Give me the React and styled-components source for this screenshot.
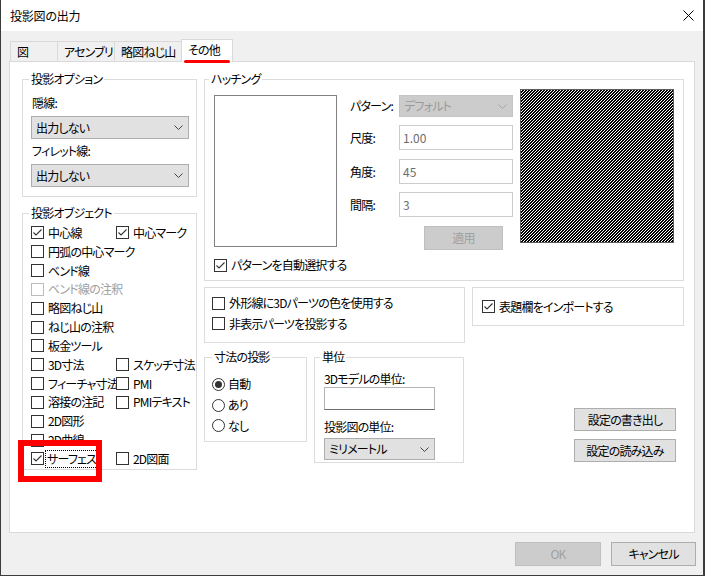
import React from 'react';
import styled, { createGlobalStyle } from 'styled-components';

const Global = createGlobalStyle`
  html, body { margin: 0; padding: 0; background: #f0f0f0; }
  body {
    font-family: "Noto Sans CJK JP", "Noto Sans", sans-serif;
    font-size: 12px;
    letter-spacing: -0.8px;
    color: #000;
  }
  * {
    box-sizing: border-box;
    font-feature-settings: "palt" 1;
  }
`;

const Window = styled.div`
  position: relative;
  width: 705px;
  height: 576px;
  background: #f0f0f0;
  border-left: 1px solid #3c3c3c;
  border-right: 2px solid #3c3c3c;
  border-bottom: 1px solid #3c3c3c;
  display: flex;
  flex-direction: column;
  overflow: hidden;
`;

const TitleBar = styled.div`
  height: 31px;
  flex: none;
  background: #fff;
  display: flex;
  align-items: center;
  padding: 0 9px 0 9px;
  line-height: 16px;
  font-size: 12px;
  letter-spacing: -0.2px;
`;

const CloseIcon = styled.svg`
  margin-left: auto;
  display: block;
`;

const TabStrip = styled.div`
  height: 30px;
  flex: none;
  display: flex;
  align-items: flex-end;
  padding-left: 9px;
`;

const Tab = styled.div`
  position: relative;
  width: ${p => p.$w}px;
  height: ${p => (p.$active ? 23 : 20)}px;
  margin-left: ${p => (p.$first ? 0 : -1)}px;
  margin-bottom: ${p => (p.$active ? -1 : 0)}px;
  padding: 0 0 ${p => (p.$active ? 3 : 0)}px 6px;
  border: 1px solid #d9d9d9;
  border-bottom: none;
  background: ${p => (p.$active ? '#fff' : '#f0f0f0')};
  z-index: ${p => (p.$active ? 2 : 1)};
  display: flex;
  align-items: center;
  line-height: 16px;
  white-space: nowrap;
`;

const Panel = styled.div`
  width: 686px;
  height: 472px;
  margin-left: 8px;
  flex: none;
  background: #fff;
  border: 1px solid #d9d9d9;
  padding: 17px 10px 0 12px;
  display: grid;
  grid-template-columns: 175px 480px;
  column-gap: 7px;
  align-items: start;
`;

const Column = styled.div`
  display: flex;
  flex-direction: column;
  gap: ${p => p.$gap}px;
`;

const Group = styled.div`
  position: relative;
  width: ${p => (p.$w ? `${p.$w}px` : 'auto')};
  height: ${p => p.$h}px;
  border: 1px solid #dcdcdc;
  padding: ${p => p.$pad};
  flex: none;
`;

const Legend = styled.span`
  position: absolute;
  top: -9px;
  left: ${p => p.$lx - 3}px;
  padding: 0 2px;
  background: #fff;
  line-height: 16px;
  white-space: nowrap;
`;

const FieldLabel = styled.div`
  line-height: 16px;
  height: 16px;
  margin-top: ${p => p.$mt || 0}px;
  margin-left: ${p => p.$ml || 0}px;
  white-space: nowrap;
`;

const SelectBox = styled.div`
  display: flex;
  align-items: center;
  justify-content: space-between;
  width: ${p => p.$w}px;
  height: ${p => p.$h}px;
  margin-top: ${p => p.$mt || 0}px;
  padding: 0 5px 0 4px;
  background: ${p => (p.$disabled ? '#cccccc' : '#e1e1e1')};
  border: 1px solid ${p => (p.$disabled ? '#c4c4c4' : '#adadad')};
  color: ${p => (p.$disabled ? '#9a9a9a' : '#000')};
  line-height: 16px;
  white-space: nowrap;
`;

const Chevron = ({ color = '#333' }) => (
  <svg width="9" height="5" viewBox="0 0 9 5" style={{ display: 'block' }}>
    <polyline points="0.5,0.5 4.5,4.5 8.5,0.5" fill="none" stroke={color} strokeWidth="1" />
  </svg>
);

const Select = ({ w, h, mt, disabled, children }) => (
  <SelectBox $w={w} $h={h} $mt={mt} $disabled={disabled}>
    <span>{children}</span>
    <Chevron color={disabled ? '#a8a8a8' : '#444'} />
  </SelectBox>
);

const ObjGrid = styled.div`
  display: flex;
  flex-direction: column;
`;

const ObjRow = styled.div`
  display: grid;
  grid-template-columns: 85px 1fr;
  height: 18.83px;
  align-items: center;
`;

const CheckWrap = styled.div`
  display: flex;
  align-items: center;
  gap: 3px;
  white-space: nowrap;
  line-height: 16px;
  color: ${p => (p.$disabled ? '#a0a0a0' : '#000')};
`;

const Box = styled.span`
  width: 13px;
  height: 13px;
  flex: none;
  border: 1px solid ${p => (p.$disabled ? '#bcbcbc' : '#333')};
  background: #fff;
  display: flex;
  align-items: center;
  justify-content: center;
`;

const FocusText = styled.span`
  outline: ${p => (p.$focus ? '1px dotted #000' : 'none')};
  padding: 0 1px;
  margin-left: ${p => (p.$focus ? -1 : 0)}px;
`;

const Check = ({ checked, disabled, focus, children }) => (
  <CheckWrap $disabled={disabled}>
    <Box $disabled={disabled}>
      {checked && (
        <svg width="11" height="11" viewBox="0 0 11 11" style={{ display: 'block' }}>
          <polyline points="1.5,5.5 4,8 9.5,2.5" fill="none" stroke="#333" strokeWidth="1.1" />
        </svg>
      )}
    </Box>
    <FocusText $focus={focus}>{children}</FocusText>
  </CheckWrap>
);

const RadioCircle = styled.span`
  width: 13px;
  height: 13px;
  flex: none;
  border: 1px solid #333;
  border-radius: 50%;
  background: #fff;
  display: flex;
  align-items: center;
  justify-content: center;
  &::after {
    content: '';
    display: ${p => (p.$on ? 'block' : 'none')};
    width: 7px;
    height: 7px;
    border-radius: 50%;
    background: #333;
  }
`;

const RadioRow = styled.div`
  display: flex;
  align-items: center;
  gap: 3px;
  height: 20.7px;
  line-height: 16px;
`;

const Radio = ({ on, children }) => (
  <RadioRow>
    <RadioCircle $on={on} />
    <span>{children}</span>
  </RadioRow>
);

const HatchTop = styled.div`
  display: flex;
  align-items: flex-start;
`;

const PreviewBox = styled.div`
  width: 123px;
  height: 152px;
  margin-top: 6px;
  border: 1px solid #828282;
  background: #fff;
  flex: none;
`;

const FormCol = styled.div`
  margin-left: 13px;
  margin-top: 6px;
  width: 163px;
  flex: none;
  display: flex;
  flex-direction: column;
`;

const FormRow = styled.div`
  display: flex;
  align-items: center;
  height: ${p => p.$h}px;
  margin-top: ${p => p.$mt || 0}px;
`;

const RowLabel = styled.div`
  width: 49px;
  flex: none;
  line-height: 16px;
  white-space: nowrap;
`;

const TextInput = styled.div`
  width: ${p => p.$w}px;
  height: ${p => p.$h}px;
  margin-top: ${p => p.$mt || 0}px;
  border: 1px solid ${p => (p.$disabled ? '#cccccc' : '#b4b4b4')};
  border-bottom-color: ${p => (p.$disabled ? '#cccccc' : '#6e6e6e')};
  background: #fff;
  color: #6d6d6d;
  padding-left: 3px;
  display: flex;
  align-items: center;
  line-height: 16px;
  letter-spacing: 0;
  flex: none;
`;

const Button = styled.div`
  width: ${p => p.$w}px;
  height: ${p => p.$h}px;
  margin-left: ${p => p.$ml || 0}px;
  background: ${p => (p.$disabled ? '#cccccc' : '#e1e1e1')};
  border: 1px solid ${p => (p.$disabled ? '#bfbfbf' : '#adadad')};
  color: ${p => (p.$disabled ? '#a0a0a0' : '#000')};
  display: flex;
  align-items: center;
  justify-content: center;
  line-height: 16px;
  white-space: nowrap;
  flex: none;
`;

const HatchSwatch = styled.svg`
  display: block;
  margin-left: 7px;
  flex: none;
`;

const CheckLine = styled.div`
  margin-top: ${p => p.$mt || 0}px;
  height: ${p => p.$h || 16}px;
  display: flex;
  align-items: center;
`;

const Row = styled.div`
  display: flex;
  align-items: ${p => p.$align || 'flex-start'};
  gap: 7px;
  margin-top: ${p => p.$mt || 0}px;
`;

const SideButtons = styled.div`
  margin-left: auto;
  margin-right: 8px;
  align-self: flex-end;
  margin-bottom: 1px;
  display: flex;
  flex-direction: column;
  gap: 8px;
`;

const Footer = styled.div`
  flex: 1;
  display: flex;
  justify-content: flex-end;
  align-items: flex-start;
  padding: 9px 7px 0 0;
  gap: 10px;
`;

const RedUnderline = styled.div`
  position: absolute;
  left: 183px;
  top: 59.5px;
  width: 46px;
  height: 3.5px;
  border-radius: 2px;
  background: #ff0000;
  z-index: 5;
`;

const RedFrame = styled.div`
  position: absolute;
  left: 17px;
  top: 440px;
  width: 84px;
  height: 42px;
  border: 6px solid #ff0000;
  z-index: 5;
`;

const objRows = [
  [{ t: '中心線', c: true }, { t: '中心マーク', c: true }],
  [{ t: '円弧の中心マーク' }],
  [{ t: 'ベンド線' }],
  [{ t: 'ベンド線の注釈', d: true }],
  [{ t: '略図ねじ山' }],
  [{ t: 'ねじ山の注釈' }],
  [{ t: '板金ツール' }],
  [{ t: '3D寸法' }, { t: 'スケッチ寸法' }],
  [{ t: 'フィーチャ寸法' }, { t: 'PMI' }],
  [{ t: '溶接の注記' }, { t: 'PMIテキスト' }],
  [{ t: '2D図形' }],
  [{ t: '2D曲線' }],
  [{ t: 'サーフェス', c: true, f: true }, { t: '2D図面' }],
];

const tabs = [
  { t: '図', w: 48 },
  { t: 'アセンブリ', w: 58 },
  { t: '略図ねじ山', w: 68 },
  { t: 'その他', w: 52, active: true },
];

export default function App() {
  return (
    <>
      <Global />
      <Window lang="ja">
        <TitleBar>
          <span>投影図の出力</span>
          <CloseIcon width="11" height="11" viewBox="0 0 11 11">
            <path d="M0.5,0.5 L10.5,10.5 M10.5,0.5 L0.5,10.5" stroke="#000" strokeWidth="1" />
          </CloseIcon>
        </TitleBar>

        <TabStrip>
          {tabs.map((tb, i) => (
            <Tab key={tb.t} $w={tb.w} $active={tb.active} $first={i === 0}>
              {tb.t}
            </Tab>
          ))}
        </TabStrip>

        <Panel>
          <Column $gap={16}>
            <Group $h={118} $pad="15px 8px 9px 8px">
              <Legend $lx={9}>投影オプション</Legend>
              <FieldLabel $ml={1}>隠線:</FieldLabel>
              <Select w={158} h={23} mt={5}>出力しない</Select>
              <FieldLabel $ml={1} $mt={4}>フィレット線:</FieldLabel>
              <Select w={158} h={23} mt={5}>出力しない</Select>
            </Group>

            <Group $h={257} $pad="9.5px 0 1px 8px">
              <Legend $lx={9}>投影オブジェクト</Legend>
              <ObjGrid>
                {objRows.map((r, i) => (
                  <ObjRow key={i}>
                    <Check checked={r[0].c} disabled={r[0].d} focus={r[0].f}>{r[0].t}</Check>
                    {r[1] ? <Check checked={r[1].c}>{r[1].t}</Check> : <span />}
                  </ObjRow>
                ))}
              </ObjGrid>
            </Group>
          </Column>

          <Column $gap={0}>
            <Group $h={202} $pad="9px 9px 0 9px">
              <Legend $lx={7}>ハッチング</Legend>
              <HatchTop>
                <PreviewBox />
                <FormCol>
                  <FormRow $h={22}>
                    <RowLabel>パターン:</RowLabel>
                    <Select w={114} h={22} disabled>デフォルト</Select>
                  </FormRow>
                  <FormRow $h={25} $mt={8}>
                    <RowLabel>尺度:</RowLabel>
                    <TextInput $w={114} $h={25} $disabled>1.00</TextInput>
                  </FormRow>
                  <FormRow $h={25} $mt={9}>
                    <RowLabel>角度:</RowLabel>
                    <TextInput $w={114} $h={25} $disabled>45</TextInput>
                  </FormRow>
                  <FormRow $h={25} $mt={8}>
                    <RowLabel>間隔:</RowLabel>
                    <TextInput $w={114} $h={25} $disabled>3</TextInput>
                  </FormRow>
                  <FormRow $h={24} $mt={9}>
                    <Button $w={79} $h={24} $ml={74} $disabled>適用</Button>
                  </FormRow>
                </FormCol>
                <HatchSwatch width="154" height="154" viewBox="0 0 154 154" shapeRendering="crispEdges">
                  <defs>
                    <pattern id="hatch" width="3" height="3" patternUnits="userSpaceOnUse">
                      <rect width="3" height="3" fill="#000" />
                      <rect x="2" y="0" width="1" height="1" fill="#fff" />
                      <rect x="1" y="1" width="1" height="1" fill="#fff" />
                      <rect x="0" y="2" width="1" height="1" fill="#fff" />
                    </pattern>
                  </defs>
                  <rect x="0" y="0" width="154" height="154" fill="url(#hatch)" />
                  <rect x="0.5" y="0.5" width="153" height="153" fill="none" stroke="#5c5c5c" strokeWidth="1" />
                </HatchSwatch>
              </HatchTop>
              <CheckLine $mt={7}>
                <Check checked>パターンを自動選択する</Check>
              </CheckLine>
            </Group>

            <Row $mt={6}>
              <Group $w={261} $h={56} $pad="5px 0 0 7px">
                <CheckLine $h={20.5}><Check>外形線に3Dパーツの色を使用する</Check></CheckLine>
                <CheckLine $h={20.5}><Check>非表示パーツを投影する</Check></CheckLine>
              </Group>
              <Group $w={212} $h={39} $pad="0 0 0 9px">
                <CheckLine $h={37}><Check checked>表題欄をインポートする</Check></CheckLine>
              </Group>
            </Row>

            <Row $mt={14}>
              <Group $w={103} $h={85} $pad="16px 0 0 7px">
                <Legend $lx={10}>寸法の投影</Legend>
                <Radio on>自動</Radio>
                <Radio>あり</Radio>
                <Radio>なし</Radio>
              </Group>
              <Group $w={150} $h={106} $pad="13px 0 2px 9px">
                <Legend $lx={8}>単位</Legend>
                <FieldLabel>3Dモデルの単位:</FieldLabel>
                <TextInput $w={111} $h={23} />
                <FieldLabel $mt={9}>投影図の単位:</FieldLabel>
                <Select w={111} h={22} mt={3}>ミリメートル</Select>
              </Group>
              <SideButtons>
                <Button $w={102} $h={23}>設定の書き出し</Button>
                <Button $w={102} $h={23}>設定の読み込み</Button>
              </SideButtons>
            </Row>
          </Column>
        </Panel>

        <Footer>
          <Button $w={86} $h={24} $disabled>OK</Button>
          <Button $w={85} $h={24}>キャンセル</Button>
        </Footer>

        <RedUnderline />
        <RedFrame />
      </Window>
    </>
  );
}
